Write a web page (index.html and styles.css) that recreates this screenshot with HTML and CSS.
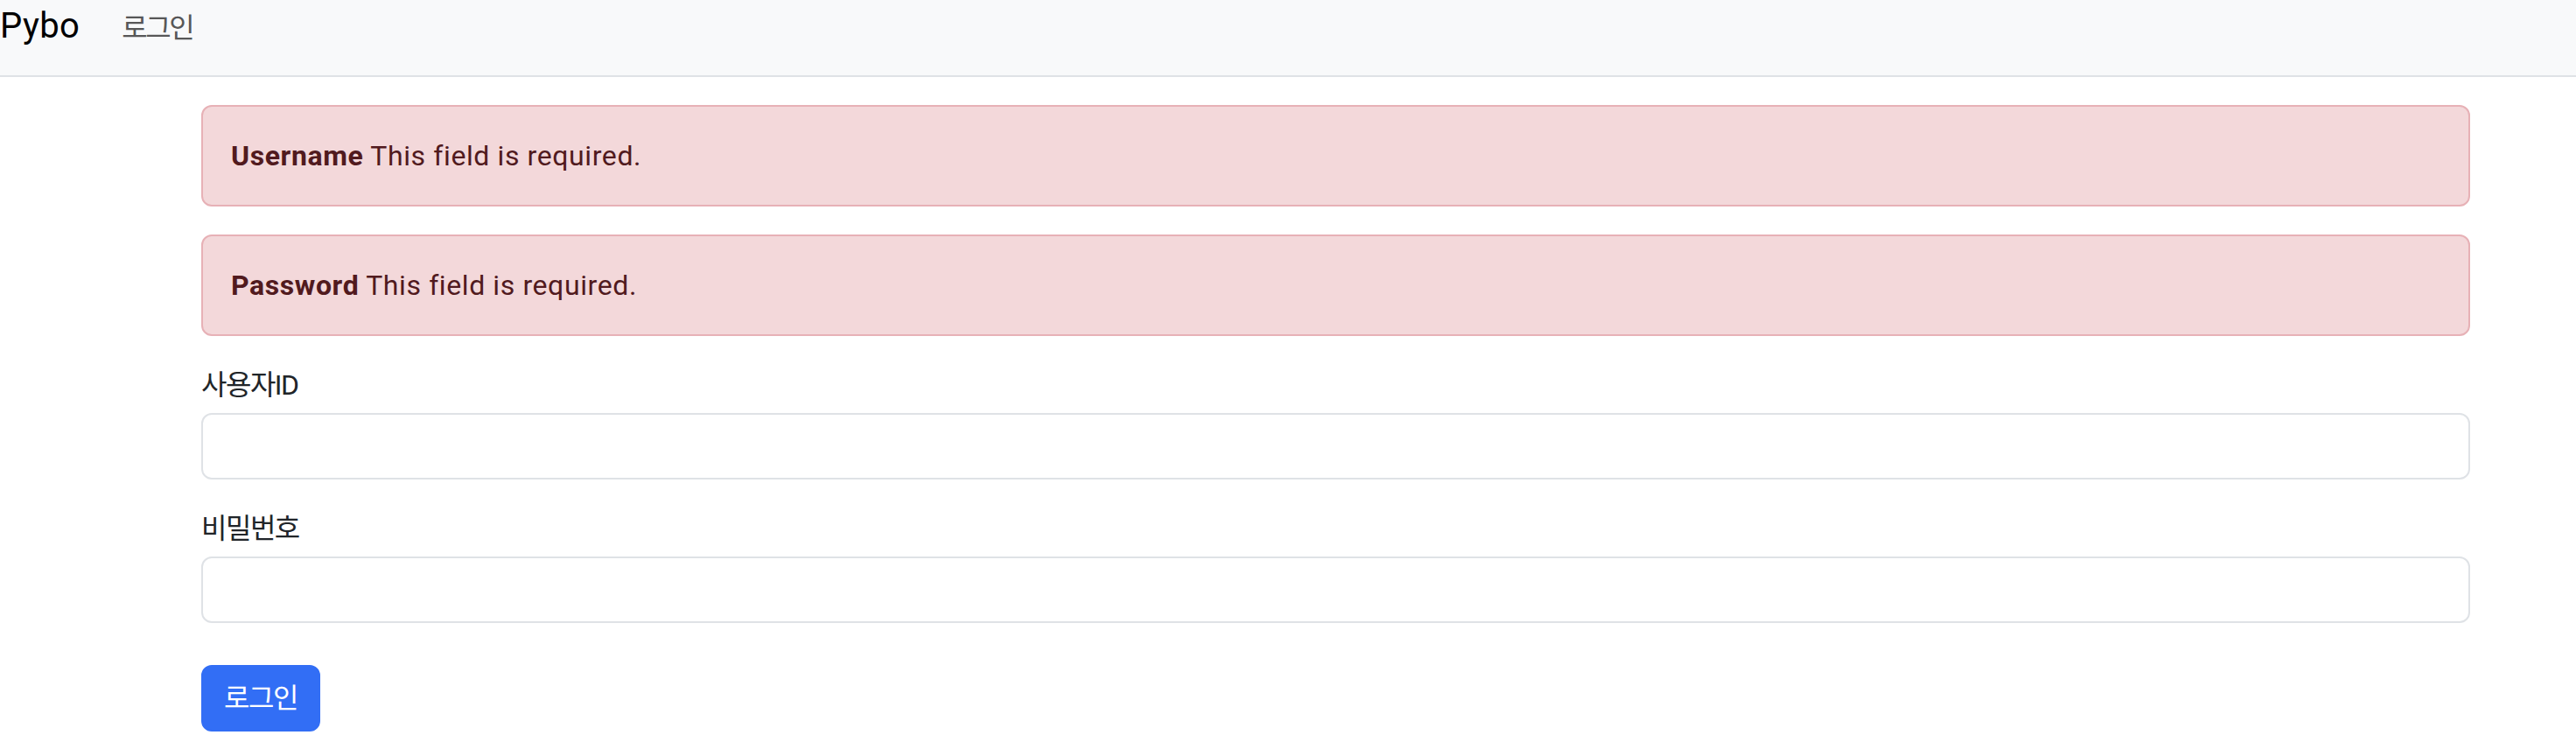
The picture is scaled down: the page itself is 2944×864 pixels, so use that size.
FILE: index.html
```html
<!DOCTYPE html>
<html lang="ko">
<head>
<meta charset="utf-8">
<title>Pybo</title>
<link rel="stylesheet" href="styles.css">
</head>
<body>
<nav class="navbar">
  <a class="brand" href="#">Pybo</a>
  <a class="nav-link ko" href="#">로그인</a>
</nav>
<main class="container">
  <div class="alert"><strong>Username</strong> This field is required.</div>
  <div class="alert"><strong>Password</strong> This field is required.</div>
  <form class="login-form">
    <div class="group">
      <label class="label ko" for="username">사용자ID</label>
      <input class="input" type="text" id="username">
    </div>
    <div class="group">
      <label class="label ko" for="password">비밀번호</label>
      <input class="input" type="password" id="password">
    </div>
    <button class="btn ko" type="submit">로그인</button>
  </form>
</main>
</body>
</html>
```
FILE: styles.css
```css
* { box-sizing: border-box; }
html, body { margin: 0; padding: 0; background: #ffffff; }
body {
  font-family: Roboto, "Noto Sans CJK KR", sans-serif;
  font-size: 32px;
  line-height: 48px;
  color: #212529;
}
.ko { letter-spacing: -1.5px; }
.navbar {
  display: flex;
  align-items: baseline;
  height: 88px;
  background: #f8f9fa;
  border-bottom: 2px solid #dfe2e6;
}
.brand {
  font-size: 40px;
  line-height: 60px;
  color: #000000;
  text-decoration: none;
  margin-right: 32px;
  letter-spacing: 0.4px;
}
.nav-link {
  font-size: 32px;
  line-height: 48px;
  color: #575757;
  text-decoration: none;
  padding: 0 16px;
  letter-spacing: -2.5px;
}
.container {
  width: 2593px;
  margin: 32px 0 0 230px;
}
.alert {
  background: #f3d8da;
  border: 2px solid #e7b1b6;
  border-radius: 12px;
  padding: 32px;
  margin-bottom: 32px;
  color: #511a1e;
  letter-spacing: 0.6px;
}
.alert strong { font-weight: 700; }
.group { margin-bottom: 32px; }
.label {
  display: block;
  margin-bottom: 8px;
}
.input {
  display: block;
  width: 100%;
  height: 76px;
  border: 2px solid #dfe2e6;
  border-radius: 12px;
  background: #ffffff;
  font: inherit;
  padding: 12px 24px;
}
.btn {
  display: inline-block;
  margin-top: 16px;
  height: 76px;
  padding: 12px 24px;
  border: 2px solid #326ef5;
  border-radius: 12px;
  background: #326ef5;
  color: #ffffff;
  font-family: Roboto, "Noto Sans CJK KR", sans-serif;
  font-size: 32px;
  line-height: 48px;
}
```
